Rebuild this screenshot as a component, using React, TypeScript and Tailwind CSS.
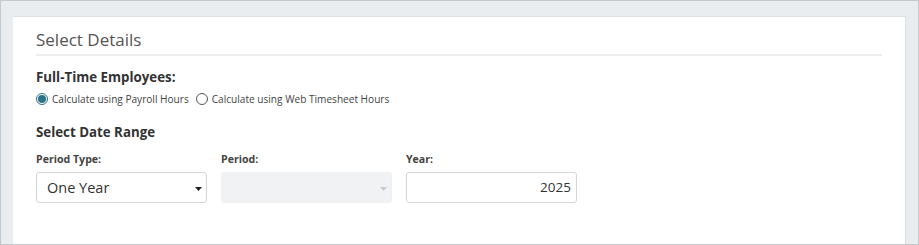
const Caret = ({ muted }: { muted?: boolean }) => (
	<svg width="7" height="4" viewBox="0 0 7 4" className="absolute right-[4px] top-[14px]">
		<path d="M0 0h7L3.5 4z" fill={muted ? '#c9ccce' : '#222'} />
	</svg>
);

const Radio = ({ checked, label }: { checked?: boolean; label: string }) => (
	<label className="flex items-center gap-[4px]">
		<span
			className={`flex h-[12px] w-[12px] items-center justify-center rounded-full border ${
				checked ? 'border-[#2b7384]' : 'border-[#555]'
			}`}
		>
			{checked && <span className="h-[8px] w-[8px] rounded-full bg-[#2b7384]" />}
		</span>
		<span>{label}</span>
	</label>
);

export default function App() {
	return (
		<div
			className="h-[245px] w-[919px] overflow-hidden border border-[#c5c9cb] bg-[#e9edf0] pl-[12px] pr-[12px] pt-[15px]"
			style={{ fontFamily: '"Open Sans", "Liberation Sans", sans-serif' }}
		>
			<div className="h-full border-t border-r border-[#dde1e3] bg-white px-[23px] pt-[12px]">
				<div className="border-b-2 border-[#eeeeee] pb-[3px] text-[17px] leading-[22px] text-[#555]">
					Select Details
				</div>

				<div className="mt-[11px] text-[13.3px] font-bold leading-[20px] text-[#333]">
					Full-Time Employees:
				</div>
				<div className="mt-[4px] flex gap-[7px] text-[10.1px] leading-[16px] text-[#444]">
					<Radio checked label="Calculate using Payroll Hours" />
					<Radio label="Calculate using Web Timesheet Hours" />
				</div>

				<div className="mt-[15px] text-[13.3px] font-bold leading-[20px] text-[#333]">
					Select Date Range
				</div>

				<div className="mt-[9px] flex gap-[14px]">
					<div className="w-[171px]">
						<div className="text-[10.6px] font-bold leading-[16px] text-[#444]">Period Type:</div>
						<div className="relative mt-[5px] flex h-[31px] items-center rounded-[3px] border border-[#d4d6d8] px-[10px] text-[14.5px] text-[#333]">
							One Year
							<Caret />
						</div>
					</div>
					<div className="w-[171px]">
						<div className="text-[10.6px] font-bold leading-[16px] text-[#444]">Period:</div>
						<div className="relative mt-[5px] h-[31px] rounded-[3px] border border-[#eef0f1] bg-[#f1f2f3]">
							<Caret muted />
						</div>
					</div>
					<div className="w-[171px]">
						<div className="text-[10.6px] font-bold leading-[16px] text-[#444]">Year:</div>
						<div className="mt-[5px] flex h-[31px] items-center justify-end rounded-[3px] border border-[#d4d6d8] px-[5px] text-[13.5px] text-[#333]">
							2025
						</div>
					</div>
				</div>
			</div>
		</div>
	);
}
